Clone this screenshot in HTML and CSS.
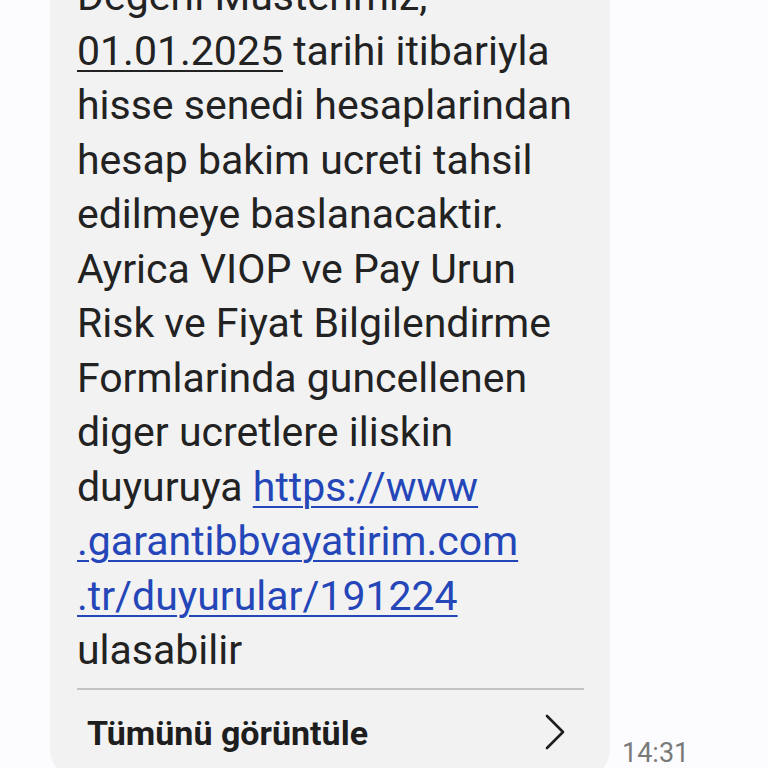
FILE: index.html
```html
<!DOCTYPE html>
<html>
<head>
<meta charset="utf-8">
<link rel="stylesheet" href="styles.css">
</head>
<body>
<div class="row">
  <div class="bubble">
    <div class="msg">
      <span class="line">Degerli Musterimiz,</span>
      <span class="line"><span class="date">01.01.2025</span> tarihi itibariyla</span>
      <span class="line">hisse senedi hesaplarindan</span>
      <span class="line">hesap bakim ucreti tahsil</span>
      <span class="line">edilmeye baslanacaktir.</span>
      <span class="line">Ayrica VIOP ve Pay Urun</span>
      <span class="line">Risk ve Fiyat Bilgilendirme</span>
      <span class="line">Formlarinda guncellenen</span>
      <span class="line">diger ucretlere iliskin</span>
      <span class="line">duyuruya <a class="link" href="#">https://www</a></span>
      <span class="line"><a class="link" href="#">.garantibbvayatirim.com</a></span>
      <span class="line"><a class="link" href="#">.tr/duyurular/191224</a></span>
      <span class="line">ulasabilir</span>
    </div>
    <div class="divider"></div>
    <div class="more">
      <span class="more-text">Tümünü görüntüle</span>
      <svg class="chev" width="22" height="36" viewBox="0 0 22 36"><path d="M3 2 L19 18 L3 34" fill="none" stroke="#1e1e1e" stroke-width="2.6" stroke-linecap="round" stroke-linejoin="round"/></svg>
    </div>
  </div>
  <div class="time">14:31</div>
</div>
</body>
</html>
```
FILE: styles.css
```css
html, body {
  margin: 0;
  padding: 0;
  background: #fcfcfe;
  overflow: hidden;
  height: 768px;
}
.row {
  display: flex;
  align-items: flex-end;
  margin-left: 50px;
  margin-top: -53px;
}
.bubble {
  width: 560px;
  background: #f2f2f2;
  border-radius: 34px;
  padding: 22px 26px 22px 27px;
  box-sizing: border-box;
  font-family: Roboto, "Noto Sans", sans-serif;
}
.msg {
  font-size: 41px;
  line-height: 54.5px;
  color: #222;
}
.line {
  display: block;
  white-space: nowrap;
}
.date {
  text-decoration: underline;
  text-decoration-thickness: 2px;
  text-underline-offset: 5px;
}
.link {
  color: #2446b8;
  text-decoration: underline;
  text-decoration-thickness: 2px;
  text-underline-offset: 5px;
}
.divider {
  height: 2px;
  background: #c4c4c4;
  margin-top: 10px;
}
.more {
  display: flex;
  align-items: center;
  justify-content: space-between;
  padding: 16px 18px 0 10px;
  height: 54px;
}
.more-text {
  font-size: 34px;
  font-weight: 700;
  color: #1e1e1e;
}
.chev {
  margin-top: -2px;
}
.time {
  font-family: Roboto, "Noto Sans", sans-serif;
  font-size: 27px;
  line-height: 24px;
  color: #7a7a7a;
  margin-left: 12px;
  margin-bottom: 17px;
}
```
